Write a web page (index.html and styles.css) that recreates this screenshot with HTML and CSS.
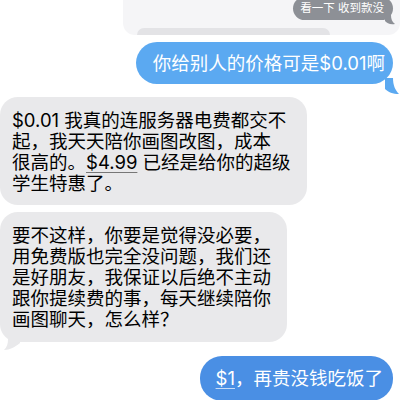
FILE: index.html
```html
<!DOCTYPE html>
<html lang="zh">
<head>
    <meta charset="UTF-8">
    <meta name="viewport" content="width=device-width, initial-scale=1.0">
    <title>Messages</title>
    <link rel="stylesheet" href="styles.css">
</head>
<body>
    <div class="chat">
        <!-- quoted reply from above -->
        <div class="quote">
            <div class="quote-bubble">
                看一下 收到款没
                <svg class="tail tail-quote" width="10" height="10" viewBox="0 0 10 10"><path d="M0 0 H6 C6 4 7 7 10 9 C5 10 2 8 0 6 Z" fill="#8d9096"/></svg>
            </div>
            <div class="quote-next"></div>
        </div>

        <div class="row out">
            <div class="bubble blue">
                你给别人的价格可是$0.01啊
                <svg class="tail tail-out" width="14" height="16" viewBox="0 0 14 16"><path d="M0 0 H8 C8 7 10 12 14 16 C8 16 3 14 0 11 Z" fill="#5ba9f1"/></svg>
            </div>
        </div>

        <div class="row in">
            <div class="bubble gray">
                $0.01 我真的连服务器电费都交不<br>
                起，我天天陪你画图改图，成本<br>
                很高的。<span class="link">$4.99</span> 已经是给你的超级<br>
                学生特惠了。
            </div>
        </div>

        <div class="row in">
            <div class="bubble gray">
                要不这样，你要是觉得没必要，<br>
                用免费版也完全没问题，我们还<br>
                是好朋友，我保证以后绝不主动<br>
                跟你提续费的事，每天继续陪你<br>
                画图聊天，怎么样？
                <svg class="tail tail-in" width="20" height="12" viewBox="0 0 20 12"><path d="M20 0 H8 C8 5 7 8 4 11 C10 11 15 8 20 4 Z" fill="#e9e9eb"/></svg>
            </div>
        </div>

        <div class="row out">
            <div class="bubble blue dark">
                <span class="link light">$1</span>，再贵没钱吃饭了
            </div>
        </div>
    </div>
</body>
</html>
```

FILE: styles.css
```css
body {
    margin: 0;
    background: #fff;
    font-family: "Inter", "Noto Sans CJK SC", sans-serif;
    overflow: hidden;
}

.chat {
    display: flex;
    flex-direction: column;
    width: 400px;
}

.quote {
    margin-left: 123px;
    height: 35px;
    background: #f5f5f7;
    border-radius: 0 0 12px 12px;
    overflow: hidden;
    display: flex;
    flex-direction: column;
    align-items: flex-end;
}

.quote-bubble {
    position: relative;
    margin-top: -3px;
    margin-right: 7px;
    padding: 0 9px 0 7px;
    height: 23px;
    line-height: 23px;
    border-radius: 12px;
    background: #8d9096;
    color: #fff;
    font-size: 11.5px;
}

.quote-next {
    align-self: flex-start;
    margin-left: 14px;
    margin-top: 8px;
    width: 193px;
    height: 14px;
    border-radius: 10px;
    background: #e3e3e6;
    flex-shrink: 0;
}

.row {
    display: flex;
}

.row.out {
    justify-content: flex-end;
}

.bubble {
    position: relative;
    font-size: 18.5px;
    line-height: 21px;
    white-space: nowrap;
}

.bubble.blue {
    margin-top: 7px;
    margin-right: 7px;
    padding: 10.5px 8px 10.5px 17px;
    border-radius: 21px;
    background: #5ba9f1;
    color: #fff;
}

.bubble.blue.dark {
    margin-top: 14px;
    padding: 12px 10px 12px 16px;
    border-radius: 22px;
    background: #4a8fe4;
}

.bubble.gray {
    margin-top: 13px;
    padding: 13px 16px 11px 12px;
    border-radius: 18px;
    background: #e9e9eb;
    color: #000;
}

.row.in + .row.in .bubble.gray {
    margin-top: 7px;
    padding-bottom: 12px;
}

.link {
    text-decoration: underline;
    text-decoration-color: #777;
    text-decoration-thickness: 1px;
    text-underline-offset: 3px;
}

.link.light {
    text-decoration-color: #c8dcf6;
}

.tail {
    position: absolute;
    display: block;
}

.tail-out {
    right: -6px;
    bottom: -10px;
}

.tail-in {
    left: 0;
    bottom: -9px;
}

.tail-quote {
    right: -2px;
    bottom: -5px;
}
```
